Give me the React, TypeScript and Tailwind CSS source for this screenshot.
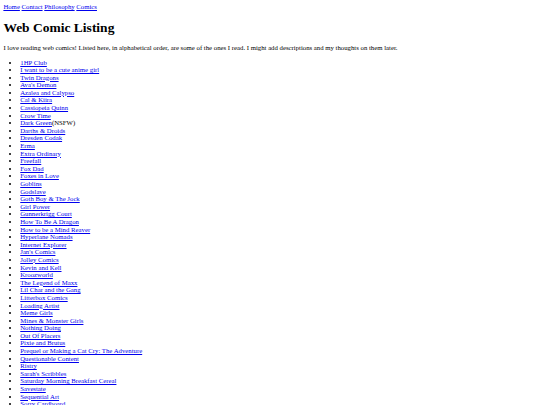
const comics: { name: string; note?: string }[] = [
  { name: '1HP Club' },
  { name: 'I want to be a cute anime girl' },
  { name: 'Twin Dragons' },
  { name: "Ava's Demon" },
  { name: 'Azalea and Calypso' },
  { name: 'Cal & Kiira' },
  { name: 'Cassiopeia Quinn' },
  { name: 'Crow Time' },
  { name: 'Dark Green', note: '(NSFW)' },
  { name: 'Darths & Droids' },
  { name: 'Dresden Codak' },
  { name: 'Erma' },
  { name: 'Extra Ordinary' },
  { name: 'Freefall' },
  { name: 'Fox Dad' },
  { name: 'Foxes in Love' },
  { name: 'Goblins' },
  { name: 'Godslave' },
  { name: 'Goth Boy & The Jock' },
  { name: 'Girl Power' },
  { name: 'Gunnerkrigg Court' },
  { name: 'How To Be A Dragon' },
  { name: 'How to be a Mind Reaver' },
  { name: 'Hyperlane Nomads' },
  { name: 'Internet Explorer' },
  { name: "Jan's Comics" },
  { name: 'Jolley Comics' },
  { name: 'Kevin and Kell' },
  { name: 'Kroozworld' },
  { name: 'The Legend of Maxx' },
  { name: 'Lil Char and the Gang' },
  { name: 'Litterbox Comics' },
  { name: 'Loading Artist' },
  { name: 'Meme Girls' },
  { name: 'Mines & Monster Girls' },
  { name: 'Nothing Doing' },
  { name: 'Out Of Placers' },
  { name: 'Pixie and Brutus' },
  { name: 'Prequel or Making a Cat Cry: The Adventure' },
  { name: 'Questionable Content' },
  { name: 'Ristry' },
  { name: "Sarah's Scribbles" },
  { name: 'Saturday Morning Breakfast Cereal' },
  { name: 'Savestate' },
  { name: 'Sequential Art' },
  { name: 'Sorry Cardboard' },
];

const link = 'text-[#0000ee] underline';

export default function App() {
  return (
    <div className="h-[405px] overflow-hidden bg-white p-[3.375px] font-['Liberation_Serif',serif] text-[6.75px] leading-[7.6px] text-black">
      <div>
        <a href="#" className={link}>Home</a>{' '}
        <a href="#" className={link}>Contact</a>{' '}
        <a href="#" className={link}>Philosophy</a>{' '}
        <a href="#" className={link}>Comics</a>
      </div>
      <h1 className="my-[9px] text-[13.5px] leading-[15.2px] font-bold">Web Comic Listing</h1>
      <p className="my-[6.75px]">
        I love reading web comics! Listed here, in alphabetical order, are some of the ones I read. I
        might add descriptions and my thoughts on them later.
      </p>
      <ul className="my-[6.75px] list-disc pl-[16.875px]">
        {comics.map((c) => (
          <li key={c.name}>
            <a href="#" className={link}>{c.name}</a>
            {c.note}
          </li>
        ))}
      </ul>
    </div>
  );
}
